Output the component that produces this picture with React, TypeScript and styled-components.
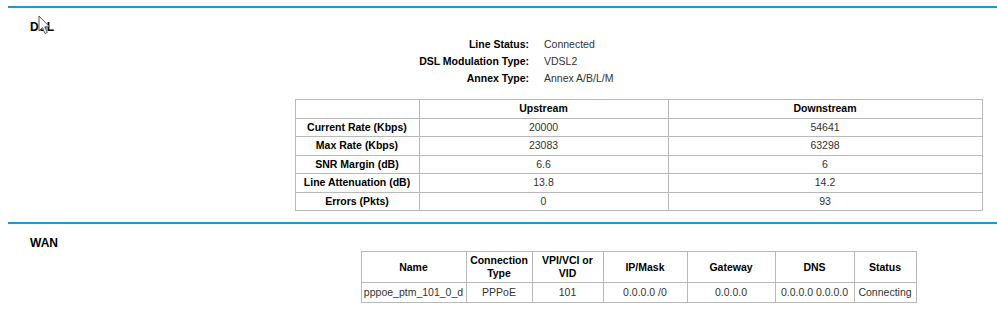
import React from 'react';
import styled, { createGlobalStyle } from 'styled-components';

const blue = '#1b9ad6';
const line = '#b9b9b9';

const dslInfo = [
  { label: 'Line Status:', value: 'Connected' },
  { label: 'DSL Modulation Type:', value: 'VDSL2' },
  { label: 'Annex Type:', value: 'Annex A/B/L/M' },
];

const dslRows = [
  { name: 'Current Rate (Kbps)', up: '20000', down: '54641' },
  { name: 'Max Rate (Kbps)', up: '23083', down: '63298' },
  { name: 'SNR Margin (dB)', up: '6.6', down: '6' },
  { name: 'Line Attenuation (dB)', up: '13.8', down: '14.2' },
  { name: 'Errors (Pkts)', up: '0', down: '93' },
];

const wanCols = [
  { title: 'Name', width: 105 },
  { title: 'Connection Type', width: 66 },
  { title: 'VPI/VCI or VID', width: 71 },
  { title: 'IP/Mask', width: 84 },
  { title: 'Gateway', width: 88 },
  { title: 'DNS', width: 79 },
  { title: 'Status', width: 62 },
];

const wanRow = ['pppoe_ptm_101_0_d', 'PPPoE', '101', '0.0.0.0 /0', '0.0.0.0', '0.0.0.0 0.0.0.0', 'Connecting'];

const Cursor = () => (
  <CursorIcon width='13' height='20' viewBox='0 0 13 20'>
    <path d='M1 1 L1 16 L4.5 12.6 L7 18.5 L9.3 17.5 L6.8 11.8 L11.5 11.8 Z' fill='#fff' stroke='#555' strokeWidth='1' strokeLinejoin='round' />
  </CursorIcon>
);

const App: React.FC = () => (
  <>
    <GlobalStyle />
    <Page>
      <Section>
        <Heading>DSL</Heading>
        <Cursor />
        <Content>
          <InfoGrid>
            {dslInfo.map((item) => (
              <React.Fragment key={item.label}>
                <InfoLabel>{item.label}</InfoLabel>
                <InfoValue>{item.value}</InfoValue>
              </React.Fragment>
            ))}
          </InfoGrid>
          <Table $width={688} $rowHeight={18.5}>
            <colgroup>
              <col style={{ width: 124 }} />
              <col style={{ width: 249 }} />
              <col />
            </colgroup>
            <thead>
              <tr>
                <Th />
                <Th>Upstream</Th>
                <Th>Downstream</Th>
              </tr>
            </thead>
            <tbody>
              {dslRows.map((row) => (
                <tr key={row.name}>
                  <Th>{row.name}</Th>
                  <Td>{row.up}</Td>
                  <Td>{row.down}</Td>
                </tr>
              ))}
            </tbody>
          </Table>
        </Content>
      </Section>

      <Section>
        <Heading>WAN</Heading>
        <Content>
          <WanTable $width={555} $rowHeight={20}>
            <colgroup>
              {wanCols.map((c) => (
                <col key={c.title} style={{ width: c.width }} />
              ))}
            </colgroup>
            <thead>
              <tr>
                {wanCols.map((c) => (
                  <Th key={c.title}>{c.title}</Th>
                ))}
              </tr>
            </thead>
            <tbody>
              <tr>
                {wanRow.map((v, i) => (
                  <Td key={i}>{v}</Td>
                ))}
              </tr>
            </tbody>
          </WanTable>
        </Content>
      </Section>
    </Page>
  </>
);

export default App;

const GlobalStyle = createGlobalStyle`
  body {
    margin: 0;
    background: #fff;
    font-family: 'Liberation Sans', Arial, sans-serif;
    font-size: 10.5px;
    color: #333;
  }
`;

const Page = styled.div`
  padding: 6px 0 0 8px;
`;

const Section = styled.section`
  position: relative;
  border-top: 2px solid ${blue};
  padding-bottom: 11px;
`;

const Heading = styled.h3`
  margin: 12px 0 0 22px;
  font-size: 12px;
  line-height: 14px;
  font-weight: bold;
  color: #000;
`;

const CursorIcon = styled.svg`
  position: absolute;
  left: 30px;
  top: 7px;
`;

const Content = styled.div`
  margin-left: 272px;
`;

const InfoGrid = styled.div`
  display: grid;
  grid-template-columns: 249px auto;
  column-gap: 15px;
  margin: 2px 0 12px;
  line-height: 17px;
`;

const InfoLabel = styled.div`
  text-align: right;
  font-weight: bold;
  color: #000;
`;

const InfoValue = styled.div`
  color: #333;
`;

const Table = styled.table<{ $width: number; $rowHeight: number }>`
  width: ${(p) => p.$width}px;
  margin: 0 auto;
  border-collapse: collapse;
  table-layout: fixed;
  border: 1px solid ${line};

  th,
  td {
    height: ${(p) => p.$rowHeight}px;
    box-sizing: border-box;
    padding: 0 2px;
    border: 1px solid ${line};
    text-align: center;
    line-height: 13px;
    font-size: 10.5px;
    white-space: nowrap;
  }
`;

const WanTable = styled(Table)`
  margin-top: 1px;

  thead th {
    height: 31px;
    white-space: normal;
  }
`;

const Th = styled.th`
  font-weight: bold;
  color: #000;
`;

const Td = styled.td`
  color: #333;
`;
